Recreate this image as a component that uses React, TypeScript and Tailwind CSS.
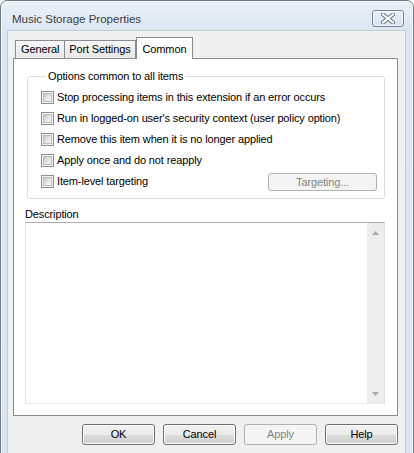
const OPTIONS = [
  "Stop processing items in this extension if an error occurs",
  "Run in logged-on user's security context (user policy option)",
  "Remove this item when it is no longer applied",
  "Apply once and do not reapply",
];

function Checkbox() {
  return (
    <span className="flex h-[13px] w-[13px] shrink-0 items-center justify-center border border-[#8e8f8f] bg-[#f4f4f4]">
      <span className="h-[9px] w-[9px] border border-[#bcbcbc] bg-[linear-gradient(135deg,#c9c9c9_0%,#e6e6e6_55%,#f7f7f7_100%)]" />
    </span>
  );
}

function Row({ label }: { label: string }) {
  return (
    <label className="flex h-[13px] items-center gap-[3px]">
      <Checkbox />
      <span className="leading-[13px]">{label}</span>
    </label>
  );
}

function DialogButton({ label, disabled }: { label: string; disabled?: boolean }) {
  return (
    <button
      className={
        disabled
          ? "h-[21px] w-[73px] rounded-[3px] border border-[#adb2b5] bg-[#f4f4f4] text-[#838383]"
          : "h-[21px] w-[73px] rounded-[3px] border border-[#707070] bg-[linear-gradient(to_bottom,#f2f2f2_0%,#ebebeb_50%,#dddddd_50%,#cfcfcf_100%)] text-black shadow-[inset_0_0_0_1px_#fcfcfc]"
      }
    >
      {label}
    </button>
  );
}

function CloseIcon() {
  return (
    <svg width="14" height="11" viewBox="0 0 14 11">
      <path d="M2 1.5 L12 9.5 M12 1.5 L2 9.5" stroke="#6b7380" strokeWidth="4" strokeLinecap="square" />
      <path d="M2 1.5 L12 9.5 M12 1.5 L2 9.5" stroke="#ffffff" strokeWidth="2" strokeLinecap="square" />
    </svg>
  );
}

function Arrow({ up }: { up?: boolean }) {
  return (
    <svg width="7" height="4" viewBox="0 0 7 4">
      <path d={up ? "M0 4 L3.5 0 L7 4 Z" : "M0 0 L3.5 4 L7 0 Z"} fill="#a9a9a9" />
    </svg>
  );
}

export default function App() {
  return (
    <div
      className="h-[453px] w-[414px] overflow-hidden text-[11px] tracking-[-0.13px] text-black"
      style={{ fontFamily: '"Liberation Sans", Arial, sans-serif' }}
    >
      <div className="flex h-[470px] flex-col rounded-t-[7px] border border-[#6f7a87] bg-[linear-gradient(to_bottom,#e9f0f8_0px,#dce7f4_30px,#d9e5f3_100%)] shadow-[inset_0_0_0_1px_rgba(255,255,255,0.7)]">
        <div className="flex h-[29px] shrink-0 items-center justify-between pl-[11px] pr-[9px] pt-[8px]">
          <span className="text-[11.5px] tracking-normal text-[#3c3c3c]">Music Storage Properties</span>
          <button className="flex h-[17px] w-[32px] -translate-y-[1px] items-center justify-center rounded-[3px] border border-[#77849a] bg-[linear-gradient(to_bottom,#edf2f9,#d5e0ee)] shadow-[inset_0_0_0_1px_rgba(255,255,255,0.6)]">
            <CloseIcon />
          </button>
        </div>

        <div className="ml-[6px] mr-[7px] flex flex-1 flex-col border-x border-t border-[#bfcbd9] bg-[#f0f0f0] pl-[5px] pt-[6px]">
          <div className="flex h-[21px] items-end pl-[2px]">
            <div className="flex h-[18px] items-center border border-b-0 border-[#898c95] bg-[linear-gradient(to_bottom,#f6f6f6,#e8e8e8)] px-[5px]">
              General
            </div>
            <div className="flex h-[18px] items-center border border-b-0 border-l-0 border-[#898c95] bg-[linear-gradient(to_bottom,#f6f6f6,#e8e8e8)] px-[4px]">
              Port Settings
            </div>
            <div className="relative z-10 -mb-px flex h-[22px] items-start border border-b-0 border-[#898c95] bg-white px-[6px] pt-[3px]">
              Common
            </div>
          </div>

          <div className="flex h-[358px] w-[385px] flex-col border border-[#898c95] bg-white pl-[11px] pr-[12px]">
            <fieldset className="ml-[2px] mt-[11px] h-[129px] rounded-[3px] border border-[#d5dfe5] pl-[13px] pr-[7px]">
              <legend className="ml-[5px] px-[2px] leading-[13px]">Options common to all items</legend>
              <div className="mt-[8px] flex flex-col gap-[8px]">
                {OPTIONS.map((o) => (
                  <Row key={o} label={o} />
                ))}
                <div className="flex h-[13px] items-center justify-between">
                  <Row label="Item-level targeting" />
                  <button className="h-[18px] w-[109px] shrink-0 rounded-[3px] border border-[#adb2b5] bg-[#f4f4f4] text-[#838383]">
                    Targeting...
                  </button>
                </div>
              </div>
            </fieldset>

            <div className="mt-[9px] leading-[13px]">Description</div>
            <div className="mt-[1px] flex h-[182px] border border-[#abadb3] border-x-[#dbdfe6] border-b-[#e3e9ef] bg-white">
              <div className="flex-1" />
              <div className="flex w-[17px] flex-col items-center justify-between bg-[#ededed] pb-[7px] pt-[8px]">
                <Arrow up />
                <Arrow />
              </div>
            </div>
          </div>

          <div className="mt-[8px] flex justify-end gap-[8px] pr-[7px]">
            <DialogButton label="OK" />
            <DialogButton label="Cancel" />
            <DialogButton label="Apply" disabled />
            <DialogButton label="Help" />
          </div>
        </div>
      </div>
    </div>
  );
}
